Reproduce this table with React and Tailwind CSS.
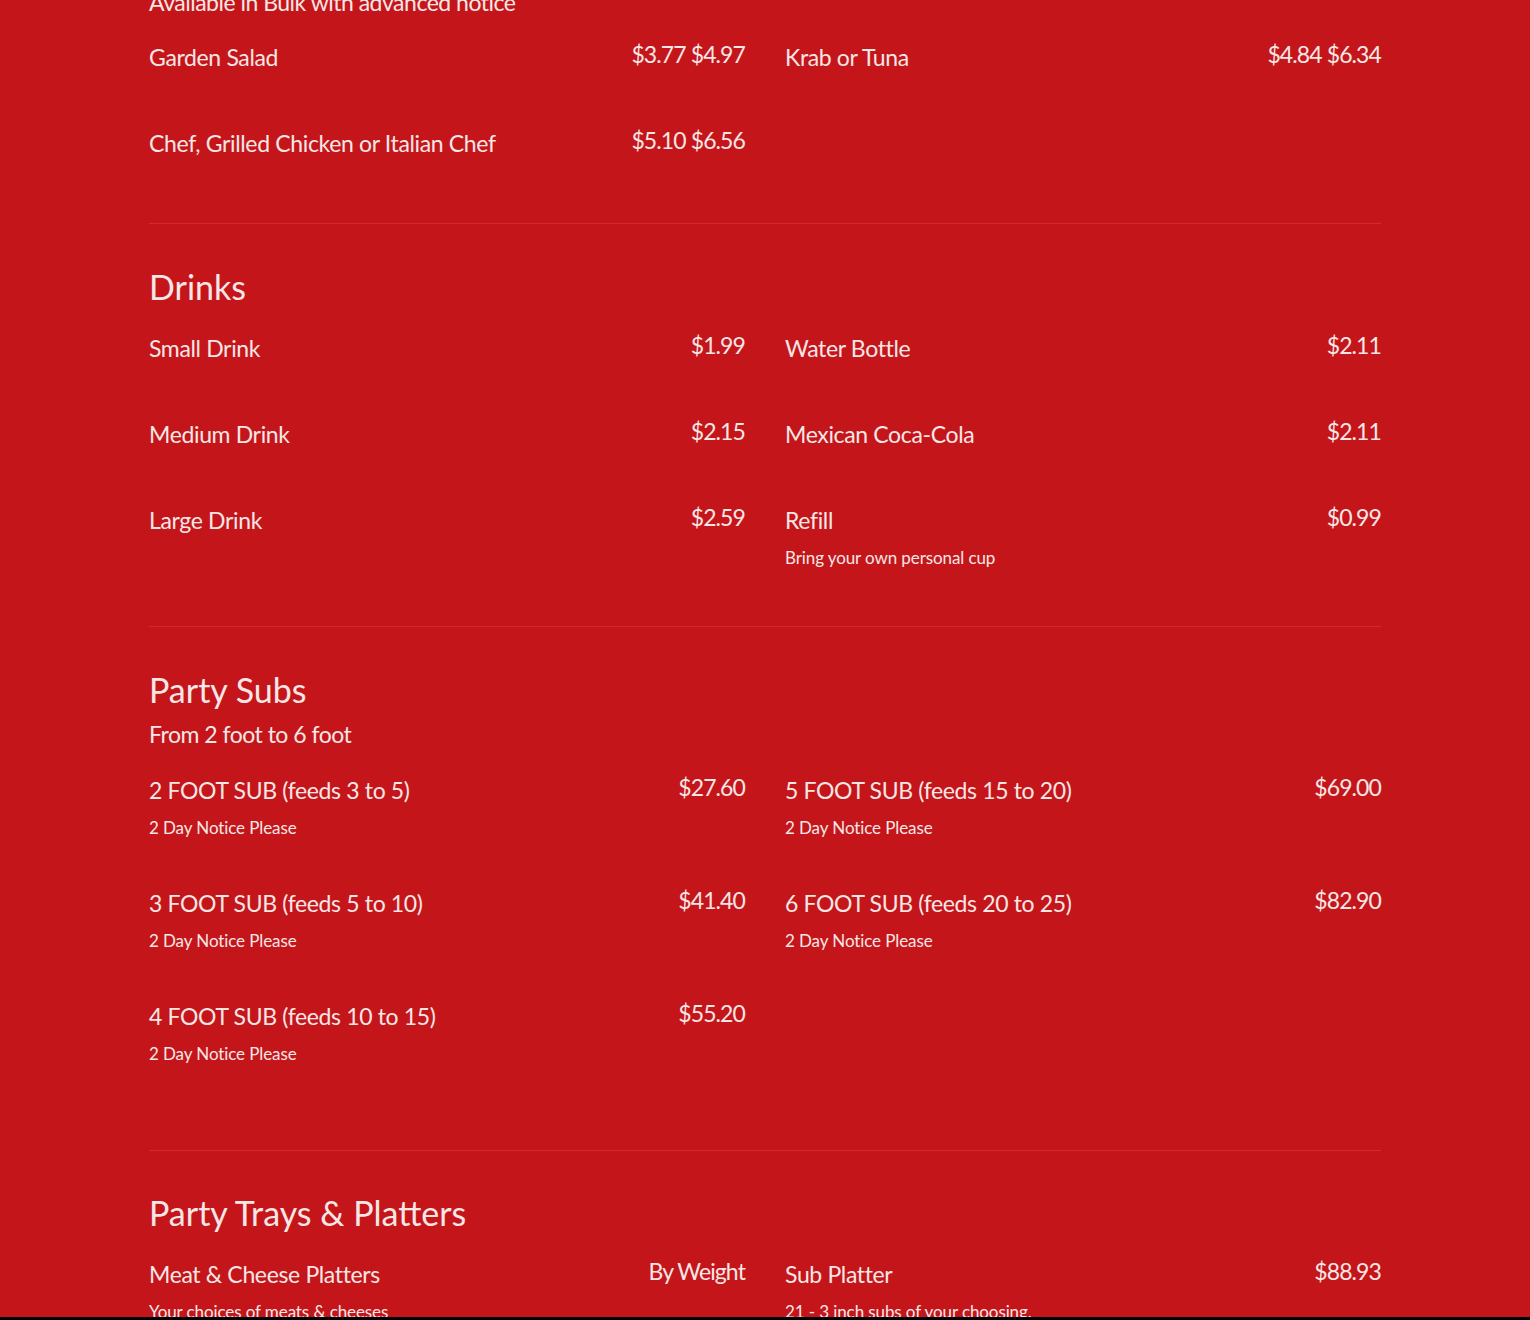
import React from "react";

const Item = ({ name, price, desc }) => (
  <div className={desc ? "h-[113px]" : "h-[86px]"}>
    <div className="flex justify-between items-start">
      <div className="text-[23px] leading-[32px] tracking-[-0.35px]">{name}</div>
      <div className="text-[23px] leading-[32px] tracking-[-0.9px] -mt-[3px]">{price}</div>
    </div>
    {desc && <div className="mt-[10px] text-[17px] leading-[24px] tracking-[-0.1px]">{desc}</div>}
  </div>
);

const Columns = ({ left, right }) => (
  <div className="grid grid-cols-2 gap-x-[40px]">
    <div>{left.map((it, i) => <Item key={i} {...it} />)}</div>
    <div>{right.map((it, i) => <Item key={i} {...it} />)}</div>
  </div>
);

const Divider = () => <div className="h-px bg-[#d52a2c]" />;

const Heading = ({ children }) => (
  <h2 className="text-[34px] leading-[44px] font-normal">{children}</h2>
);

export default function App() {
  return (
    <div className="bg-black h-[1320px]">
      <div
        className="bg-[#c4161a] h-[1317px] overflow-hidden text-[#f7e6e6]"
        style={{ fontFamily: "Lato, 'Noto Sans', sans-serif" }}
      >
        <div className="mx-auto w-[1232px]">
          {/* Salads (partial) */}
          <div className="-mt-[14px] text-[23px] leading-[32px] tracking-[-0.5px]">Available in Bulk with advanced notice</div>
          <div className="mt-[23px]">
            <Columns
              left={[
                { name: "Garden Salad", price: "$3.77 $4.97" },
                { name: "Chef, Grilled Chicken or Italian Chef", price: "$5.10 $6.56" },
              ]}
              right={[{ name: "Krab or Tuna", price: "$4.84 $6.34" }]}
            />
          </div>
          <div className="mt-[10px]"><Divider /></div>

          {/* Drinks */}
          <div className="mt-[41px]"><Heading>Drinks</Heading></div>
          <div className="mt-[23px]">
            <Columns
              left={[
                { name: "Small Drink", price: "$1.99" },
                { name: "Medium Drink", price: "$2.15" },
                { name: "Large Drink", price: "$2.59" },
              ]}
              right={[
                { name: "Water Bottle", price: "$2.11" },
                { name: "Mexican Coca-Cola", price: "$2.11" },
                { name: "Refill", price: "$0.99", desc: "Bring your own personal cup" },
              ]}
            />
          </div>
          <div className="mt-[9px]"><Divider /></div>

          {/* Party Subs */}
          <div className="mt-[41px]"><Heading>Party Subs</Heading></div>
          <div className="mt-[6px] text-[23px] leading-[32px] tracking-[-0.5px]">From 2 foot to 6 foot</div>
          <div className="mt-[24px]">
            <Columns
              left={[
                { name: "2 FOOT SUB (feeds 3 to 5)", price: "$27.60", desc: "2 Day Notice Please" },
                { name: "3 FOOT SUB (feeds 5 to 10)", price: "$41.40", desc: "2 Day Notice Please" },
                { name: "4 FOOT SUB (feeds 10 to 15)", price: "$55.20", desc: "2 Day Notice Please" },
              ]}
              right={[
                { name: "5 FOOT SUB (feeds 15 to 20)", price: "$69.00", desc: "2 Day Notice Please" },
                { name: "6 FOOT SUB (feeds 20 to 25)", price: "$82.90", desc: "2 Day Notice Please" },
              ]}
            />
          </div>
          <div className="mt-[37px]"><Divider /></div>

          {/* Party Trays */}
          <div className="mt-[40px]"><Heading>Party Trays &amp; Platters</Heading></div>
          <div className="mt-[23px]">
            <Columns
              left={[{ name: "Meat & Cheese Platters", price: "By Weight", desc: "Your choices of meats & cheeses" }]}
              right={[{ name: "Sub Platter", price: "$88.93", desc: "21 - 3 inch subs of your choosing." }]}
            />
          </div>
        </div>
      </div>
    </div>
  );
}
